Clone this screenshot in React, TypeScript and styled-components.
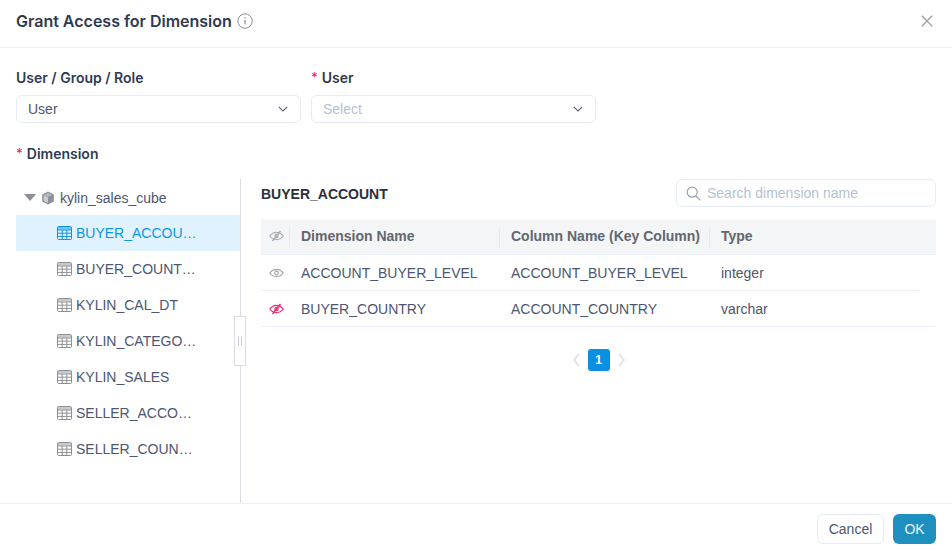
import React from "react";
import styled, { createGlobalStyle, css } from "styled-components";

const bodyFont = `"Liberation Sans", Arimo, Arial, sans-serif`;

const Global = createGlobalStyle`
  html, body { margin: 0; padding: 0; background: #fff; }
  body { font-family: ${bodyFont}; color: #2e3a52; }
  * { box-sizing: border-box; }
`;

const Dialog = styled.div`
  width: 952px;
  height: 551px;
  display: flex;
  flex-direction: column;
  background: #fff;
  overflow: hidden;
`;
const Header = styled.header`
  height: 48px;
  flex: none;
  display: flex;
  align-items: center;
  justify-content: space-between;
  padding: 0 19px 5px 16px;
  border-bottom: 1px solid #ecf0f8;
`;
const TitleWrap = styled.div`
  display: flex;
  align-items: center;
  gap: 5px;
`;
const Title = styled.h1`
  margin: 0;
  font-family: Inter, ${bodyFont};
  font-size: 16px;
  line-height: 22px;
  font-weight: 600;
  color: #2f3a52;
`;
const Body = styled.main`
  flex: 1;
  min-height: 0;
  display: flex;
  flex-direction: column;
  padding: 19px 16px 0;
`;
const FormRow = styled.div`
  display: flex;
  gap: 10px;
`;
const Field = styled.div`
  width: 285px;
`;
const Label = styled.div`
  display: flex;
  align-items: center;
  height: 20px;
  font-family: Inter, ${bodyFont};
  font-size: 14px;
  font-weight: 600;
  color: #2f3a52;
  margin-bottom: 8px;
`;
const Star = styled.span`
  color: #f5266f;
  font-weight: 500;
  margin-right: 4px;
  font-size: 13px;
`;
const Select = styled.div`
  height: 28px;
  display: flex;
  align-items: center;
  justify-content: space-between;
  padding: 0 12px 0 11px;
  border: 1px solid #e6ebf4;
  border-radius: 6px;
`;
const SelectText = styled.span<{ $placeholder?: boolean }>`
  font-size: 14px;
  color: ${(p) => (p.$placeholder ? "#b4bfd2" : "#4c5670")};
`;
const DimLabel = styled(Label)`
  margin: 20px 0 16px;
`;
const Split = styled.div`
  flex: 1;
  min-height: 0;
  display: flex;
`;
const Tree = styled.aside`
  position: relative;
  width: 225px;
  flex: none;
  border-right: 1px solid #d9dbe0;
`;
const RootRow = styled.div`
  height: 36px;
  display: flex;
  align-items: center;
  padding: 1px 0 0 8px;
  font-size: 14px;
  color: #4c5670;
`;
const Caret = styled.span`
  width: 0;
  height: 0;
  border-left: 6px solid transparent;
  border-right: 6px solid transparent;
  border-top: 7px solid #8b8f96;
  margin-right: 5px;
`;
const TreeRow = styled.div<{ $active?: boolean }>`
  height: 36px;
  display: flex;
  align-items: center;
  padding-left: 41px;
  font-size: 14px;
  color: ${(p) => (p.$active ? "#0b96e5" : "#4c5670")};
  background: ${(p) => (p.$active ? "#e0f2fd" : "transparent")};
`;
const RowLabel = styled.span`
  width: 122px;
  margin-left: 4px;
  white-space: nowrap;
  overflow: hidden;
  text-overflow: ellipsis;
`;
const Handle = styled.div`
  position: absolute;
  right: -6px;
  top: 137px;
  width: 12px;
  height: 50px;
  background: #fff;
  border: 1px solid #d9dbe0;
  display: flex;
  align-items: center;
  justify-content: center;
  gap: 2px;
`;
const Grip = styled.i`
  display: block;
  width: 1px;
  height: 9px;
  background: #c9ccd2;
`;
const Pane = styled.section`
  flex: 1;
  min-width: 0;
  padding-left: 20px;
`;
const PaneHead = styled.div`
  height: 28px;
  display: flex;
  align-items: center;
  justify-content: space-between;
  margin-bottom: 12px;
`;
const PaneTitle = styled.h2`
  margin: 1px 0 0;
  font-size: 14px;
  font-weight: 700;
  color: #2b2f38;
`;
const Search = styled.div`
  width: 260px;
  height: 28px;
  display: flex;
  align-items: center;
  gap: 6px;
  padding-left: 9px;
  border: 1px solid #e6ebf4;
  border-radius: 6px;
  font-size: 14px;
  color: #b4bfd2;
`;
const Grid = styled.div`
  display: grid;
  grid-template-columns: 29px 210px 210px 1fr;
`;
const cellBase = css`
  height: 36px;
  display: flex;
  align-items: center;
  font-size: 14px;
  border-bottom: 1px solid #ecf0f8;
`;
const HeadCell = styled.div<{ $sep?: boolean; $icon?: boolean }>`
  ${cellBase}
  padding: 0 0 1px ${(p) => (p.$icon ? "8px" : "11px")};
  font-weight: 700;
  color: #63676f;
  background: #f4f5f6;
  position: relative;
  &::after {
    content: "";
    display: ${(p) => (p.$sep ? "block" : "none")};
    position: absolute;
    right: 0;
    top: 8px;
    height: 20px;
    width: 1px;
    background: #e6e9ef;
  }
`;
const Cell = styled.div<{ $inset?: boolean; $icon?: boolean }>`
  ${cellBase}
  padding-left: ${(p) => (p.$icon ? "8px" : "11px")};
  color: #4c5670;
  margin-right: ${(p) => (p.$inset ? "16px" : "0")};
`;
const Pager = styled.nav`
  display: flex;
  justify-content: center;
  align-items: center;
  gap: 7px;
  margin-top: 22px;
`;
const PageNum = styled.span`
  width: 22px;
  height: 22px;
  display: flex;
  align-items: center;
  justify-content: center;
  background: #0b8fe3;
  color: #fff;
  border-radius: 3px;
  font-size: 12px;
  font-weight: 700;
`;
const Footer = styled.footer`
  height: 48px;
  flex: none;
  display: flex;
  align-items: center;
  justify-content: flex-end;
  gap: 9px;
  padding: 3px 16px 0;
  border-top: 1px solid #ecf0f8;
`;
const CancelButton = styled.button`
  width: 67px;
  height: 30px;
  font: 400 14px ${bodyFont};
  color: #4c5670;
  background: #fff;
  border: 1px solid #e6ebf4;
  border-radius: 6px;
`;
const OkButton = styled.button`
  width: 43px;
  height: 30px;
  font: 400 14px ${bodyFont};
  color: #e8f5fb;
  background: #1e90bf;
  border: none;
  border-radius: 6px;
`;
const IconSvg = styled.svg`
  display: block;
  flex: none;
`;
const CubeSvg = styled(IconSvg)`
  margin-right: 5px;
`;

const InfoIcon = () => (
  <IconSvg width="16" height="16" viewBox="0 0 16 16" fill="none" stroke="#8b8f96">
    <circle cx="8" cy="8" r="7.2" />
    <path d="M8 7v4.5M8 4.2v1.2" strokeWidth="1.2" />
  </IconSvg>
);
const CloseIcon = () => (
  <IconSvg width="12" height="12" viewBox="0 0 12 12" fill="none" stroke="#a3a6ab" strokeWidth="1.5">
    <path d="M.8.8l10.4 10.4M11.2.8L.8 11.2" />
  </IconSvg>
);
const Chevron = () => (
  <IconSvg width="10" height="6" viewBox="0 0 10 6" fill="none" stroke="#5c6478" strokeWidth="1.2">
    <path d="M.8.8L5 5l4.2-4.2" />
  </IconSvg>
);
const CubeIcon = () => (
  <CubeSvg width="14" height="14" viewBox="0 0 14 14">
    <path d="M7 .5l5.8 3v7L7 13.5 1.2 10.5v-7z" fill="#8b8f96" />
    <path d="M2.6 4.3L7 6.6V12L2.6 9.7z" fill="#fff" opacity=".55" />
    <path d="M7 1.8l4.2 2.2L7 6.2 2.8 4z" fill="#fff" opacity=".35" />
  </CubeSvg>
);
const TableIcon = ({ color }: { color: string }) => (
  <IconSvg width="15" height="14" viewBox="0 0 15 14" fill="none" stroke={color} strokeWidth="1">
    <rect x=".5" y=".5" width="14" height="13" rx="1" />
    <path d="M.5 4h14M.5 7.2h14M.5 10.4h14M5.2 4v9.5M9.8 4v9.5" />
    <path d="M.5 2.3h14" strokeWidth="2.6" opacity=".5" />
  </IconSvg>
);
const SearchIcon = () => (
  <IconSvg width="15" height="15" viewBox="0 0 15 15" fill="none" stroke="#98a0ae" strokeWidth="1.2">
    <circle cx="6.2" cy="6.2" r="5" />
    <path d="M10 10l4.4 4.4" />
  </IconSvg>
);
const EyeIcon = ({ color, off }: { color: string; off?: boolean }) => (
  <IconSvg width="15" height="12" viewBox="0 0 15 12" fill="none" stroke={color} strokeWidth="1.2">
    <path d="M.8 6C2.6 3.6 4.8 2.4 7.5 2.4S12.4 3.6 14.2 6c-1.8 2.4-4 3.6-6.700 3.6S2.6 8.4.8 6z" />
    <circle cx="7.5" cy="6" r={off ? 1.6 : 1.8} />
    {off && <path d="M11.5 1L3.5 11" strokeWidth="1.4" />}
  </IconSvg>
);
const PagerArrow = ({ d }: { d: string }) => (
  <IconSvg width="9" height="14" viewBox="0 0 9 14" fill="none" stroke="#dcdee2" strokeWidth="1.5">
    <path d={d} />
  </IconSvg>
);

const tables = [
  "BUYER_ACCOUNT",
  "BUYER_COUNTRY",
  "KYLIN_CAL_DT",
  "KYLIN_CATEGORY_GROUPINGS",
  "KYLIN_SALES",
  "SELLER_ACCOUNT",
  "SELLER_COUNTRY",
];

export default function App() {
  return (
    <Dialog>
      <Global />
      <Header>
        <TitleWrap>
          <Title>Grant Access for Dimension</Title>
          <InfoIcon />
        </TitleWrap>
        <CloseIcon />
      </Header>
      <Body>
        <FormRow>
          <Field>
            <Label>User / Group / Role</Label>
            <Select>
              <SelectText>User</SelectText>
              <Chevron />
            </Select>
          </Field>
          <Field>
            <Label>
              <Star>*</Star>User
            </Label>
            <Select>
              <SelectText $placeholder>Select</SelectText>
              <Chevron />
            </Select>
          </Field>
        </FormRow>
        <DimLabel>
          <Star>*</Star>Dimension
        </DimLabel>
        <Split>
          <Tree>
            <RootRow>
              <Caret />
              <CubeIcon />
              kylin_sales_cube
            </RootRow>
            {tables.map((t, i) => (
              <TreeRow key={t} $active={i === 0}>
                <TableIcon color={i === 0 ? "#0b96e5" : "#8e9196"} />
                <RowLabel>{t}</RowLabel>
              </TreeRow>
            ))}
            <Handle>
              <Grip />
              <Grip />
            </Handle>
          </Tree>
          <Pane>
            <PaneHead>
              <PaneTitle>BUYER_ACCOUNT</PaneTitle>
              <Search>
                <SearchIcon />
                Search dimension name
              </Search>
            </PaneHead>
            <Grid>
              <HeadCell $sep $icon>
                <EyeIcon color="#a9acb2" off />
              </HeadCell>
              <HeadCell $sep>Dimension Name</HeadCell>
              <HeadCell $sep>Column Name (Key Column)</HeadCell>
              <HeadCell>Type</HeadCell>
              <Cell $icon>
                <EyeIcon color="#a0a3a9" />
              </Cell>
              <Cell>ACCOUNT_BUYER_LEVEL</Cell>
              <Cell>ACCOUNT_BUYER_LEVEL</Cell>
              <Cell $inset>integer</Cell>
              <Cell $icon>
                <EyeIcon color="#f5266f" off />
              </Cell>
              <Cell>BUYER_COUNTRY</Cell>
              <Cell>ACCOUNT_COUNTRY</Cell>
              <Cell>varchar</Cell>
            </Grid>
            <Pager>
              <PagerArrow d="M7 1L2 7l5 6" />
              <PageNum>1</PageNum>
              <PagerArrow d="M2 1l5 6-5 6" />
            </Pager>
          </Pane>
        </Split>
      </Body>
      <Footer>
        <CancelButton>Cancel</CancelButton>
        <OkButton>OK</OkButton>
      </Footer>
    </Dialog>
  );
}
